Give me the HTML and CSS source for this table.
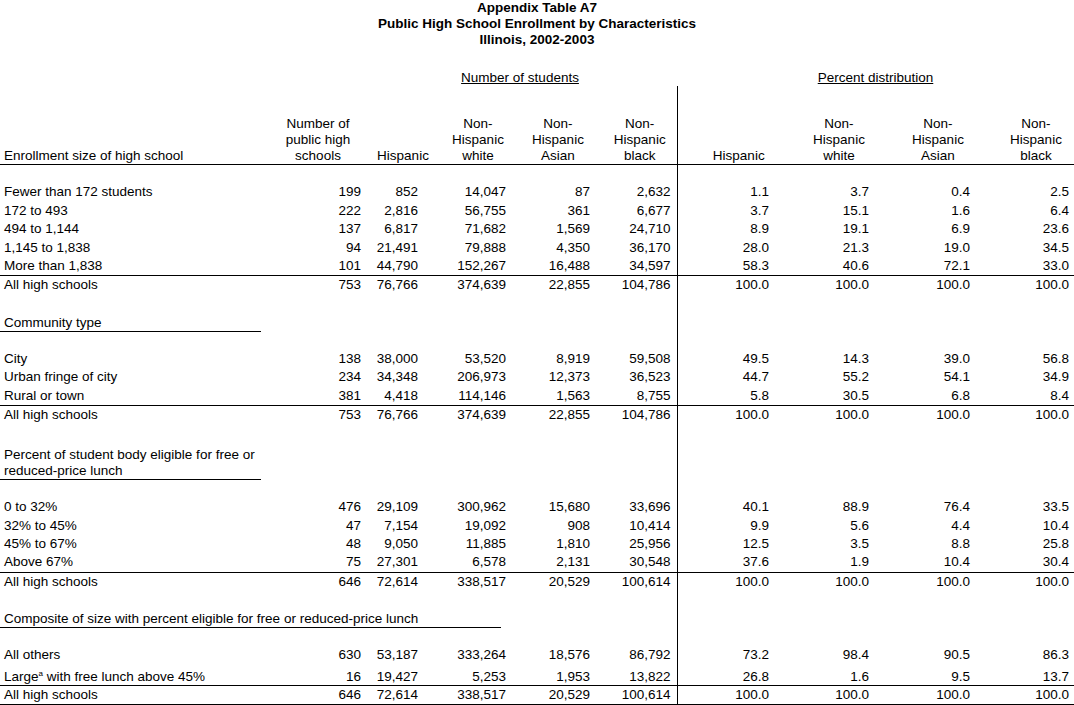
FILE: index.html
```html
<!DOCTYPE html>
<html lang="en">
<head>
<meta charset="utf-8">
<title>Appendix Table A7</title>
<link rel="stylesheet" href="styles.css">
</head>
<body>
<div class="title">
  <div>Appendix Table A7</div>
  <div>Public High School Enrollment by Characteristics</div>
  <div>Illinois, 2002-2003</div>
</div>
<table class="tbl">
  <colgroup>
    <col class="c-label"><col class="c1"><col class="c2"><col class="c3"><col class="c4"><col class="c5"><col class="c6"><col class="c7"><col class="c8"><col class="c9">
  </colgroup>
  <tr class="group">
    <td colspan="2"></td>
    <td colspan="4" class="grp grp-num"><span class="ul">Number of students</span></td>
    <td colspan="4" class="grp grp-pct"><span class="ul">Percent distribution</span></td>
  </tr>
  <tr class="spacer"><td colspan="6"></td><td colspan="4" class="sep"></td></tr>
  <tr class="head">
    <td class="lbl">Enrollment size of high school</td>
    <td>Number of<br>public high<br>schools</td>
    <td>Hispanic</td>
    <td>Non-<br>Hispanic<br>white</td>
    <td>Non-<br>Hispanic<br>Asian</td>
    <td>Non-<br>Hispanic<br>black</td>
    <td>Hispanic</td>
    <td>Non-<br>Hispanic<br>white</td>
    <td>Non-<br>Hispanic<br>Asian</td>
    <td>Non-<br>Hispanic<br>black</td>
  </tr>
  <tr class="blank"><td colspan="6"></td><td colspan="4" class="sep"></td></tr>

  <tr class="d"><td>Fewer than 172 students</td><td>199</td><td>852</td><td>14,047</td><td>87</td><td>2,632</td><td>1.1</td><td>3.7</td><td>0.4</td><td>2.5</td></tr>
  <tr class="d"><td>172 to 493</td><td>222</td><td>2,816</td><td>56,755</td><td>361</td><td>6,677</td><td>3.7</td><td>15.1</td><td>1.6</td><td>6.4</td></tr>
  <tr class="d"><td>494 to 1,144</td><td>137</td><td>6,817</td><td>71,682</td><td>1,569</td><td>24,710</td><td>8.9</td><td>19.1</td><td>6.9</td><td>23.6</td></tr>
  <tr class="d"><td>1,145 to 1,838</td><td>94</td><td>21,491</td><td>79,888</td><td>4,350</td><td>36,170</td><td>28.0</td><td>21.3</td><td>19.0</td><td>34.5</td></tr>
  <tr class="d"><td>More than 1,838</td><td>101</td><td>44,790</td><td>152,267</td><td>16,488</td><td>34,597</td><td>58.3</td><td>40.6</td><td>72.1</td><td>33.0</td></tr>
  <tr class="d total"><td>All high schools</td><td>753</td><td>76,766</td><td>374,639</td><td>22,855</td><td>104,786</td><td>100.0</td><td>100.0</td><td>100.0</td><td>100.0</td></tr>
  <tr class="blank"><td colspan="6"></td><td colspan="4" class="sep"></td></tr>

  <tr class="blank"><td colspan="6" class="sec-cell"><div class="sec">Community type</div></td><td colspan="4" class="sep"></td></tr>
  <tr class="blank"><td colspan="6"></td><td colspan="4" class="sep"></td></tr>
  <tr class="d"><td>City</td><td>138</td><td>38,000</td><td>53,520</td><td>8,919</td><td>59,508</td><td>49.5</td><td>14.3</td><td>39.0</td><td>56.8</td></tr>
  <tr class="d"><td>Urban fringe of city</td><td>234</td><td>34,348</td><td>206,973</td><td>12,373</td><td>36,523</td><td>44.7</td><td>55.2</td><td>54.1</td><td>34.9</td></tr>
  <tr class="d"><td>Rural or town</td><td>381</td><td>4,418</td><td>114,146</td><td>1,563</td><td>8,755</td><td>5.8</td><td>30.5</td><td>6.8</td><td>8.4</td></tr>
  <tr class="d total"><td>All high schools</td><td>753</td><td>76,766</td><td>374,639</td><td>22,855</td><td>104,786</td><td>100.0</td><td>100.0</td><td>100.0</td><td>100.0</td></tr>
  <tr class="blank"><td colspan="6"></td><td colspan="4" class="sep"></td></tr>

  <tr class="blank tall"><td colspan="6" class="sec-cell"><div class="sec">Percent of student body eligible for free or<br>reduced-price lunch</div></td><td colspan="4" class="sep"></td></tr>
  <tr class="blank"><td colspan="6"></td><td colspan="4" class="sep"></td></tr>
  <tr class="d"><td>0 to 32%</td><td>476</td><td>29,109</td><td>300,962</td><td>15,680</td><td>33,696</td><td>40.1</td><td>88.9</td><td>76.4</td><td>33.5</td></tr>
  <tr class="d"><td>32% to 45%</td><td>47</td><td>7,154</td><td>19,092</td><td>908</td><td>10,414</td><td>9.9</td><td>5.6</td><td>4.4</td><td>10.4</td></tr>
  <tr class="d"><td>45% to 67%</td><td>48</td><td>9,050</td><td>11,885</td><td>1,810</td><td>25,956</td><td>12.5</td><td>3.5</td><td>8.8</td><td>25.8</td></tr>
  <tr class="d"><td>Above 67%</td><td>75</td><td>27,301</td><td>6,578</td><td>2,131</td><td>30,548</td><td>37.6</td><td>1.9</td><td>10.4</td><td>30.4</td></tr>
  <tr class="d total"><td>All high schools</td><td>646</td><td>72,614</td><td>338,517</td><td>20,529</td><td>100,614</td><td>100.0</td><td>100.0</td><td>100.0</td><td>100.0</td></tr>
  <tr class="blank"><td colspan="6"></td><td colspan="4" class="sep"></td></tr>

  <tr class="blank"><td colspan="6" class="sec-cell"><div class="sec sec-wide">Composite of size with percent eligible for free or reduced-price lunch</div></td><td colspan="4" class="sep"></td></tr>
  <tr class="blank"><td colspan="6"></td><td colspan="4" class="sep"></td></tr>
  <tr class="d"><td>All others</td><td>630</td><td>53,187</td><td>333,264</td><td>18,576</td><td>86,792</td><td>73.2</td><td>98.4</td><td>90.5</td><td>86.3</td></tr>
  <tr class="d large"><td>Large<sup>a</sup> with free lunch above 45%</td><td>16</td><td>19,427</td><td>5,253</td><td>1,953</td><td>13,822</td><td>26.8</td><td>1.6</td><td>9.5</td><td>13.7</td></tr>
  <tr class="d total last"><td>All high schools</td><td>646</td><td>72,614</td><td>338,517</td><td>20,529</td><td>100,614</td><td>100.0</td><td>100.0</td><td>100.0</td><td>100.0</td></tr>
</table>
</body>
</html>
```

FILE: styles.css
```css
html, body {
  margin: 0;
  padding: 0;
  background: #ffffff;
  color: #000000;
  font-family: "Liberation Sans", Arial, sans-serif;
  font-size: 13.5px;
}

.title {
  text-align: center;
  font-weight: bold;
  line-height: 16px;
  margin-bottom: 22px;
}

.tbl {
  width: 1074px;
  table-layout: fixed;
  border-collapse: collapse;
  border-spacing: 0;
}

.tbl td {
  padding: 0;
  white-space: nowrap;
}

.c-label { width: 273px; }
.c1 { width: 90px; }
.c2 { width: 80px; }
.c3 { width: 70px; }
.c4 { width: 90px; }
.c5 { width: 74px; }
.c6 { width: 123px; }
.c7 { width: 78px; }
.c8 { width: 120px; }
.c9 { width: 76px; }

.group td {
  line-height: 16px;
  height: 16px;
  text-align: center;
}
.grp-num { padding-left: 6px; }
.grp-pct { padding-left: 25px; }
.ul { text-decoration: underline; }

.spacer td { height: 30px; }

.sep { border-left: 1px solid #000; }

.head td {
  line-height: 16px;
  text-align: center;
  vertical-align: bottom;
  border-bottom: 1px solid #000;
}
.head td.lbl {
  text-align: left;
  padding-left: 4px;
}
.head td:nth-child(7) { border-left: 1px solid #000; }

.blank td { height: 18.4px; vertical-align: bottom; }
.blank.tall td { height: 36.8px; }

.sec {
  width: 257px;
  padding-left: 4px;
  line-height: 16px;
  border-bottom: 1px solid #000;
}
.sec-wide { width: 497px; }

.d td {
  line-height: 18.4px;
  height: 18.4px;
  text-align: right;
}
.d td:first-child {
  text-align: left;
  padding-left: 4px;
}
.d td:nth-child(2) { padding-right: 2px; }
.d td:nth-child(3) { padding-right: 25px; }
.d td:nth-child(4) { padding-right: 7px; }
.d td:nth-child(5) { padding-right: 13px; }
.d td:nth-child(6) { padding-right: 6px; }
.d td:nth-child(7) { padding-right: 31px; border-left: 1px solid #000; }
.d td:nth-child(8) { padding-right: 9px; }
.d td:nth-child(9) { padding-right: 28px; }
.d td:nth-child(10) { padding-right: 5px; }

.total td { border-top: 1px solid #000; }
.last td { border-bottom: 1px solid #000; }

.large td {
  height: 20px;
  line-height: 16px;
  vertical-align: bottom;
}
.large sup {
  font-size: 8px;
  line-height: 0;
  vertical-align: 5px;
}
```
